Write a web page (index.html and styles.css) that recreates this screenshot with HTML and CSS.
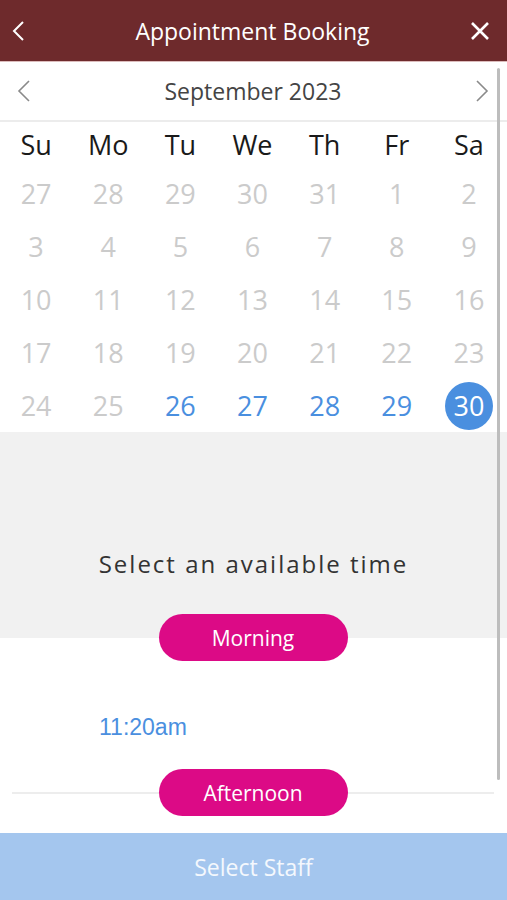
FILE: index.html
```html
<!DOCTYPE html>
<html lang="en">
<head>
    <meta charset="UTF-8">
    <meta name="viewport" content="width=device-width, initial-scale=1.0">
    <title>Appointment Booking</title>
    <link rel="stylesheet" href="styles.css">
</head>
<body>
    <div class="app">
        <div class="header">
            <svg class="header-back" width="14" height="22" viewBox="0 0 14 22">
                <path d="M12 2 L3 11 L12 20" fill="none" stroke="#fff" stroke-width="2"/>
            </svg>
            <div class="title">Appointment Booking</div>
            <svg class="header-close" width="20" height="20" viewBox="0 0 20 20">
                <path d="M2 2 L18 18 M18 2 L2 18" fill="none" stroke="#fff" stroke-width="2.6"/>
            </svg>
        </div>

        <div class="content">
            <div class="month-nav">
                <svg width="14" height="24" viewBox="0 0 14 24">
                    <path d="M12 2 L2 12 L12 22" fill="none" stroke="#8a8a8a" stroke-width="1.6"/>
                </svg>
                <div class="month-title">September 2023</div>
                <svg width="14" height="24" viewBox="0 0 14 24">
                    <path d="M2 2 L12 12 L2 22" fill="none" stroke="#8a8a8a" stroke-width="1.6"/>
                </svg>
            </div>

            <div class="calendar">
                <div class="weekday">Su</div>
                <div class="weekday">Mo</div>
                <div class="weekday">Tu</div>
                <div class="weekday">We</div>
                <div class="weekday">Th</div>
                <div class="weekday">Fr</div>
                <div class="weekday">Sa</div>

                <div class="day off">27</div>
                <div class="day off">28</div>
                <div class="day off">29</div>
                <div class="day off">30</div>
                <div class="day off">31</div>
                <div class="day off">1</div>
                <div class="day off">2</div>

                <div class="day off">3</div>
                <div class="day off">4</div>
                <div class="day off">5</div>
                <div class="day off">6</div>
                <div class="day off">7</div>
                <div class="day off">8</div>
                <div class="day off">9</div>

                <div class="day off">10</div>
                <div class="day off">11</div>
                <div class="day off">12</div>
                <div class="day off">13</div>
                <div class="day off">14</div>
                <div class="day off">15</div>
                <div class="day off">16</div>

                <div class="day off">17</div>
                <div class="day off">18</div>
                <div class="day off">19</div>
                <div class="day off">20</div>
                <div class="day off">21</div>
                <div class="day off">22</div>
                <div class="day off">23</div>

                <div class="day off">24</div>
                <div class="day off">25</div>
                <div class="day open">26</div>
                <div class="day open">27</div>
                <div class="day open">28</div>
                <div class="day open">29</div>
                <div class="day selected"><span>30</span></div>
            </div>

            <div class="time-intro">Select an available time</div>

            <div class="period first">
                <div class="period-pill">Morning</div>
            </div>

            <div class="slots">
                <a href="#" class="slot">11:20am</a>
            </div>

            <div class="period">
                <div class="period-line"></div>
                <div class="period-pill">Afternoon</div>
                <div class="period-line"></div>
            </div>

            <div class="scroll-thumb"></div>
        </div>

        <div class="footer">Select Staff</div>
    </div>
</body>
</html>
```

FILE: styles.css
```css
:root {
    --header-bg: #6e2a2c;
    --blue: #4a8fdf;
    --pink: #dc0a86;
    --grey-day: #cbcbcb;
    --line: #e6e6e6;
}

body {
    margin: 0;
    font-family: "Open Sans", sans-serif;
    background: #fff;
}

.app {
    height: 100vh;
    display: flex;
    flex-direction: column;
}

.header {
    height: 61px;
    flex-shrink: 0;
    padding: 0 17px 0 11px;
    display: grid;
    grid-template-columns: 1fr auto 1fr;
    align-items: center;
    background: var(--header-bg);
    border-bottom: 1px solid #dcbcbc;
}

.header-close {
    justify-self: end;
}

.title {
    color: #fff;
    font-size: 23px;
    margin-left: 4px;
}

.content {
    flex: 1;
    position: relative;
    overflow: hidden;
}

.month-nav {
    height: 58px;
    padding: 0 18px 0 17px;
    display: flex;
    align-items: center;
    justify-content: space-between;
    border-bottom: 2px solid #ececec;
}

.month-title {
    font-size: 23px;
    color: #444;
}

.calendar {
    display: grid;
    grid-template-columns: repeat(7, 1fr);
    grid-auto-rows: 53px;
    grid-template-rows: 45px;
    padding-right: 2px;
}

.weekday {
    display: flex;
    align-items: center;
    justify-content: center;
    font-size: 27px;
    color: #1a1a1a;
}

.day {
    display: flex;
    align-items: center;
    justify-content: center;
    font-size: 27px;
}

.day.off {
    color: var(--grey-day);
}

.day.open {
    color: var(--blue);
}

.day.selected span {
    width: 48px;
    height: 48px;
    border-radius: 50%;
    background: var(--blue);
    color: #fff;
    display: flex;
    align-items: center;
    justify-content: center;
}

.time-intro {
    height: 206px;
    box-sizing: border-box;
    background: #f1f1f1;
    display: flex;
    align-items: flex-end;
    justify-content: center;
    padding-bottom: 58px;
    font-size: 24px;
    letter-spacing: 2px;
    color: #333;
}

.period {
    display: flex;
    align-items: center;
    padding: 0 13px 0 12px;
}

.period.first {
    justify-content: center;
    margin-top: -24px;
}

.period-line {
    flex: 1;
    height: 2px;
    background: #ededed;
}

.period-pill {
    width: 189px;
    height: 47px;
    border-radius: 24px;
    background: var(--pink);
    color: #fff;
    font-size: 21px;
    display: flex;
    align-items: center;
    justify-content: center;
}

.slots {
    height: 108px;
    box-sizing: border-box;
    padding: 53px 0 0 99px;
}

.slot {
    font-family: "Liberation Sans", Arial, sans-serif;
    font-size: 23px;
    color: var(--blue);
    text-decoration: none;
}

.scroll-thumb {
    position: absolute;
    top: 6px;
    right: 7px;
    width: 3px;
    height: 712px;
    border-radius: 2px;
    background: #bdbdbd;
}

.footer {
    height: 67px;
    flex-shrink: 0;
    background: #a4c6ee;
    color: #f4f8fd;
    font-size: 23px;
    display: flex;
    align-items: center;
    justify-content: center;
}
```
